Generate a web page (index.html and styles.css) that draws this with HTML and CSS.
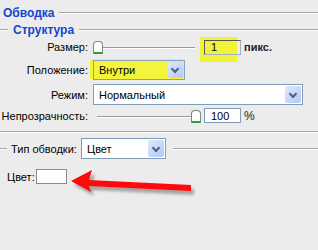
FILE: index.html
```html
<!DOCTYPE html>
<html lang="ru">
<head>
    <meta charset="UTF-8">
    <title>Обводка</title>
    <link rel="stylesheet" href="styles.css">
</head>
<body>
    <div class="panel">
        <div class="legend legend-main"><span>Обводка</span></div>
        <div class="legend legend-sub"><span>Структура</span></div>

        <div class="row row-size">
            <label class="lbl">Размер:</label>
            <div class="slider"><span class="thumb"></span></div>
            <div class="mark mark-num"><input class="num" type="text" value="1"></div>
            <span class="unit">пикс.</span>
        </div>

        <div class="row row-pos">
            <label class="lbl">Положение:</label>
            <div class="select select-pos mark-sel">
                <span class="value">Внутри</span>
                <span class="btn"></span>
            </div>
        </div>

        <div class="row row-mode">
            <label class="lbl">Режим:</label>
            <div class="select select-mode">
                <span class="value">Нормальный</span>
                <span class="btn"></span>
            </div>
        </div>

        <div class="row row-opacity">
            <label class="lbl">Непрозрачность:</label>
            <div class="slider"><span class="thumb thumb-end"></span></div>
            <input class="num" type="text" value="100">
            <span class="unit">%</span>
        </div>

        <div class="separator"></div>

        <div class="row row-type">
            <span class="tick"></span>
            <label class="lbl-type">Тип обводки:</label>
            <div class="select select-type">
                <span class="value">Цвет</span>
                <span class="btn"></span>
            </div>
            <span class="line"></span>
        </div>

        <div class="row row-color">
            <label class="lbl-color">Цвет:</label>
            <span class="swatch"></span>
        </div>

        <!-- красная стрелка поверх панели -->
        <svg class="arrow" width="318" height="250" viewBox="0 0 318 250">
            <defs>
                <filter id="blur" x="-20%" y="-50%" width="140%" height="200%">
                    <feGaussianBlur stdDeviation="1.6"/>
                </filter>
            </defs>
            <g fill="#8a8a8a" opacity="0.75" filter="url(#blur)" transform="translate(3,4)">
                <polygon points="71,181 92,170 89,180 191,185 191,191 89,186 91,192"/>
            </g>
            <polygon fill="#ff0a0a" points="71,181 92,170 89,180 191,185 191,191 89,186 91,192"/>
        </svg>
    </div>
</body>
</html>
```

FILE: styles.css
```css
body {
    margin: 0;
    background-color: #ececec;
    font-family: "Liberation Sans", Arial, sans-serif;
    font-size: 11px;
    color: #000;
}
.panel {
    position: relative;
    width: 318px;
    height: 250px;
    overflow: hidden;
}
.legend {
    display: flex;
    align-items: center;
    color: #1446d0;
    font-weight: bold;
    font-size: 12px;
}
.legend::after {
    content: "";
    flex: 1;
    height: 1px;
    background: #a8a8a0;
    border-bottom: 1px solid #fafafa;
    margin-left: 5px;
}
.legend-main {
    height: 20px;
    margin-top: 3px;
    padding-left: 3px;
}
.legend-sub {
    height: 14px;
}
.legend-sub::before {
    content: "";
    width: 8px;
    height: 1px;
    background: #a8a8a0;
    border-bottom: 1px solid #fafafa;
    margin-right: 5px;
}
.row {
    display: flex;
    align-items: center;
}
.lbl {
    width: 88px;
    text-align: right;
    flex: none;
}
.row-size {
    height: 18px;
    margin-top: 1px;
}
.row-pos {
    height: 20px;
    margin-top: 4px;
}
.row-mode {
    height: 21px;
    margin-top: 4px;
}
.row-opacity {
    height: 17px;
    margin-top: 2px;
}
.slider {
    position: relative;
    width: 103px;
    height: 12px;
    margin-left: 9px;
}
.slider::before {
    content: "";
    position: absolute;
    left: 0;
    right: 5px;
    top: 6px;
    height: 1px;
    background: #9c9c94;
    border-bottom: 1px solid #fff;
}
.thumb {
    position: absolute;
    left: -4px;
    top: 0;
    width: 8px;
    height: 10px;
    background: #fff;
    border: 1px solid #7c8a80;
    border-bottom: 2px solid #21a336;
    border-radius: 4px 4px 1px 1px;
}
.thumb-end {
    left: 94px;
}
.num {
    width: 37px;
    height: 15px;
    box-sizing: border-box;
    border: 1px solid #7f9db9;
    background: #fff;
    font: inherit;
    padding: 0 0 0 6px;
    margin: 0;
    flex: none;
}
.row-opacity .num {
    margin-left: 4px;
}
.mark {
    position: relative;
    display: flex;
    margin-left: 4px;
    isolation: isolate;
}
.mark::before {
    content: "";
    position: absolute;
    left: -4px;
    top: -3px;
    width: 37px;
    height: 25px;
    background: #f2f238;
    z-index: -1;
}
.mark-num .num {
    background: transparent;
    border-color: #565656 #9fb2c8 #9fb2c8 #565656;
}
.unit {
    margin-left: 3px;
    font-weight: bold;
    color: #222;
}
.row-opacity .unit {
    font-weight: normal;
    font-size: 12px;
}
.select {
    display: flex;
    align-items: stretch;
    box-sizing: border-box;
    border: 1px solid #7f9db9;
    background: #fff;
    flex: none;
}
.select .value {
    flex: 1;
    display: flex;
    align-items: center;
    padding-left: 5px;
}
.select .btn {
    position: relative;
    width: 16px;
    margin: 1px;
    background: linear-gradient(135deg, #dfe8fd, #b4c8f6);
    border-radius: 2px;
}
.select .btn::after {
    content: "";
    position: absolute;
    left: 5px;
    top: 50%;
    width: 4px;
    height: 4px;
    margin-top: -4px;
    border-right: 2px solid #4d6185;
    border-bottom: 2px solid #4d6185;
    transform: rotate(45deg);
}
.select-pos {
    width: 92px;
    height: 20px;
    margin-left: 5px;
    border-color: #8aa0bc;
}
.mark-sel {
    background: #f4f43c;
    box-shadow: -3px -1px 0 #f4f43c;
}
.select-mode {
    width: 210px;
    height: 21px;
    margin-left: 5px;
}
.separator {
    margin-top: 7px;
    height: 1px;
    background: #a8a8a0;
    border-bottom: 1px solid #fafafa;
}
.row-type {
    height: 21px;
    margin-top: 5px;
}
.tick {
    width: 7px;
    height: 1px;
    background: #a8a8a0;
    border-bottom: 1px solid #fafafa;
}
.lbl-type {
    margin-left: 4px;
    width: 70px;
}
.select-type {
    width: 85px;
    height: 21px;
}
.row-type .line {
    flex: 1;
    height: 1px;
    background: #a8a8a0;
    border-bottom: 1px solid #fafafa;
    margin-left: 7px;
}
.row-color {
    height: 17px;
    margin-top: 9px;
}
.lbl-color {
    margin-left: 7px;
    width: 29px;
}
.swatch {
    width: 31px;
    height: 15px;
    box-sizing: border-box;
    border: 1px solid #8c8c8c;
    background: #fff;
}
.arrow {
    position: absolute;
    left: 0;
    top: 0;
    pointer-events: none;
}
```
